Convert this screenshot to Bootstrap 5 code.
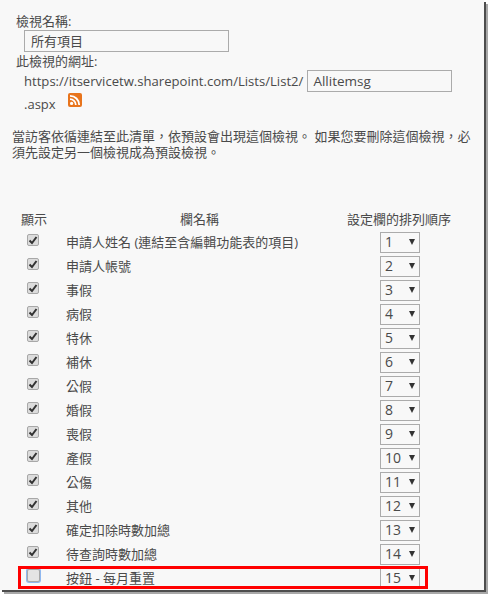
<!DOCTYPE html>
<html lang="en">
<head>
  <meta charset="UTF-8" />
  <title>檢視名稱</title>
  <link href="https://cdn.jsdelivr.net/npm/bootstrap@5.3.2/dist/css/bootstrap.min.css" rel="stylesheet"/>
  <style>
    html, body { height: 100%; }
    body { background: #fff; overflow: hidden; font-family: "Open Sans", "Noto Sans CJK TC", sans-serif; color: #4a4a4a; font-size: 13px; line-height: 18px; }
    .sheet { width: 484px; height: 590px; background: #f8f8f8; box-shadow: 2px 2px 0 #4d4d4d, 4px 4px 0 #a8a8a8; padding: 12px 0 0 12px; overflow: hidden; position: relative; }
    .lbl { padding-left: 4px; }
    .name-box { width: 205px; height: 22px; margin-left: 12px; border: 1px solid #ababab; padding: 0 6px; line-height: 20px; }
    .url-line { padding-left: 12px; font-size: 13.1px; line-height: 22px; }
    .slug-box { width: 145px; height: 22px; margin-left: 4px; border: 1px solid #ababab; padding: 0 5px; font-size: 13.5px; line-height: 21px; }
    .aspx-line { padding-left: 12px; margin-top: 1px; font-size: 13px; line-height: 20px; }
    .rss { margin: 0 0 8px 12px; }
    .note { width: 462px; margin-top: 13px; line-height: 16px; }
    .head-row { margin-top: 48px; height: 22px; padding-top: 2px; }
    .head-show { flex: none; width: 46px; padding-left: 9px; }
    .head-name { flex: none; width: 283px; }
    .head-order { flex: none; width: 116px; }
    .list-row { height: 24px; }
    .col-show { width: 40px; padding-left: 15px; flex: none; margin-top: -4px; }
    .col-name { flex: none; width: 328px; padding-left: 14px; }
    .col-order { flex: none; width: 40px; }
    .fake-check { width: 12px; height: 12px; border: 1px solid #a8a8a8; border-radius: 2px; background: #dcdcdc; }
    .fake-check svg { display: block; }
    .fake-check.is-off { width: 13px; height: 13px; margin-top: -1px; box-shadow: 0 0 0 1px #8fb8f0; background: #e4e4e4; }
    .order-box { width: 40px; height: 21px; border: 1px solid #ababab; padding: 0 4px; font-size: 14px; }
    .arrow { width: 0; height: 0; border-left: 3.5px solid transparent; border-right: 3.5px solid transparent; border-top: 6px solid #333; }
    .mark-red { position: absolute; left: 18px; top: 566px; width: 410px; height: 23px; border: 3px solid #f00; pointer-events: none; }
  </style>
</head>
<body>
<div class="sheet">
  <div class="lbl">檢視名稱:</div>
  <div class="name-box">所有項目</div>
  <div class="lbl">此檢視的網址:</div>
  <div class="url-line d-flex align-items-center">
    <span>https://itservicetw.sharepoint.com/Lists/List2/</span>
    <div class="slug-box">Allitemsg</div>
  </div>
  <div class="aspx-line d-flex align-items-center">
    <span>.aspx</span>
    <svg class="rss" width="14" height="14" viewBox="0 0 14 14">
      <rect width="14" height="14" rx="2" fill="#e8741c"/>
      <circle cx="3.6" cy="10.4" r="1.6" fill="#fff"/>
      <path d="M2 6.2a5.8 5.8 0 0 1 5.8 5.8M2 2.8a9.2 9.2 0 0 1 9.2 9.2" fill="none" stroke="#fff" stroke-width="1.8"/>
    </svg>
  </div>
  <div class="note">當訪客依循連結至此清單，依預設會出現這個檢視。 如果您要刪除這個檢視，必須先設定另一個檢視成為預設檢視。</div>

  <div class="head-row d-flex">
    <div class="head-show">顯示</div>
    <div class="head-name text-center">欄名稱</div>
    <div class="head-order text-center">設定欄的排列順序</div>
  </div>
  <div id="rows"></div>
  <div class="mark-red"></div>
</div>

<script>
  // rows of the column list
  const names = ["申請人姓名 (連結至含編輯功能表的項目)", "申請人帳號", "事假", "病假", "特休", "補休", "公假", "婚假", "喪假", "產假", "公傷", "其他", "確定扣除時數加總", "待查詢時數加總", "按鈕 - 每月重置"];
  const tick = '<svg width="10" height="10" viewBox="0 0 10 10"><path d="M1.5 5.5l2.5 2.5 4.5-6" fill="none" stroke="#333" stroke-width="2"/></svg>';
  document.getElementById("rows").innerHTML = names.map((n, i) => {
    const on = i < 14;
    return `<div class="list-row d-flex align-items-center">
      <div class="col-show"><div class="fake-check ${on ? "" : "is-off"}">${on ? tick : ""}</div></div>
      <div class="col-name">${n}</div>
      <div class="col-order"><div class="order-box d-flex justify-content-between align-items-center"><span>${i + 1}</span><span class="arrow"></span></div></div>
    </div>`;
  }).join("");
</script>
<script src="https://cdn.jsdelivr.net/npm/bootstrap@5.3.2/dist/js/bootstrap.bundle.min.js"></script>
</body>
</html>
